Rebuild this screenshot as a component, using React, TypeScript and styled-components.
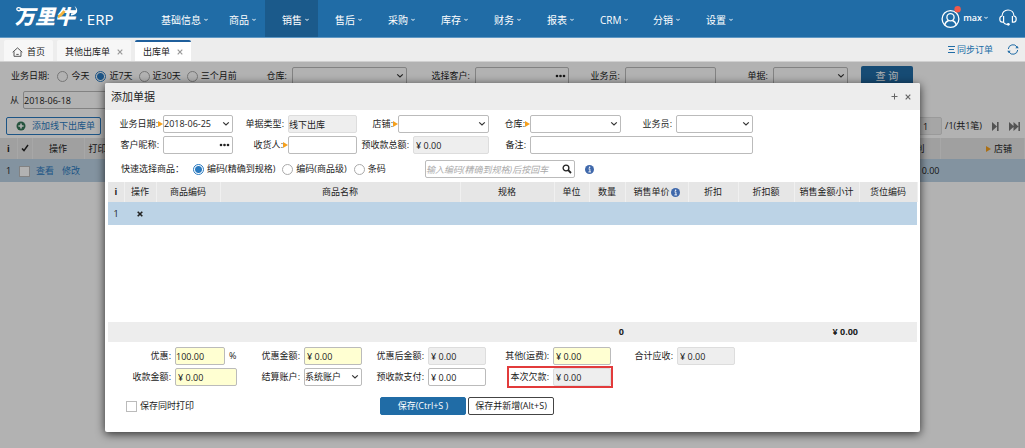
import React from 'react';
import styled, { createGlobalStyle, css } from 'styled-components';

const blue = '#206ca6';
const link = '#2a7ac0';

const GlobalStyle = createGlobalStyle`
  * { box-sizing: border-box; }
  body {
    margin: 0;
    background: #fff;
    color: #222;
    font: 9px/12px 'Open Sans', 'Noto Sans CJK SC', sans-serif;
  }
  button, input, select { font: inherit; color: inherit; }
`;

/* ---------- top bar ---------- */
const TopBar = styled.header`
  display: flex;
  height: 38px;
  background: ${blue};
  border-bottom: 1px solid #5f98c4;
  color: #fff;
`;
const Brand = styled.a`
  position: relative;
  display: flex;
  align-items: center;
  width: 144px;
  padding-left: 15px;
  color: #fff;
  text-decoration: none;
`;
const BrandName = styled.span`
  width: 64px;
  font-size: 20px;
  line-height: 34px;
  padding-bottom: 3px;
  font-weight: 900;
  font-style: italic;
`;
const BrandSwoosh = styled.svg`
  position: absolute;
  left: 14px;
  top: 4px;
`;
const BrandSuffix = styled.span`
  font-size: 15px;
  line-height: 38px;
  padding-top: 1px;
`;
const Nav = styled.nav`
  display: flex;
  flex: 1;
`;
const NavItem = styled.a<{ $active?: boolean }>`
  display: flex;
  align-items: center;
  gap: 3px;
  min-width: 53px;
  padding: 3px 4px 0 17px;
  font-size: 10px;
  color: #fff;
  text-decoration: none;
  white-space: nowrap;
  background: ${(p) => (p.$active ? '#1b5a8b' : 'transparent')};
`;
const Account = styled.div`
  display: flex;
  align-items: center;
  gap: 11px;
  padding: 0 8px 2px 0;
`;
const UserButton = styled.button`
  display: flex;
  align-items: center;
  gap: 2px;
  border: 0;
  padding: 0;
  background: none;
  font-weight: 600;
  color: #fff;
`;
const IconButton = styled.button`
  display: inline-flex;
  padding: 0;
  border: 0;
  background: none;
  color: inherit;
`;

/* ---------- tabs ---------- */
const TabBar = styled.div`
  display: flex;
  align-items: flex-end;
  gap: 4px;
  height: 24px;
  padding: 0 6px 0 4px;
  background: #ededed;
  border-bottom: 1px solid #d0d0d0;
`;
const Tab = styled.div<{ $active?: boolean; $home?: boolean }>`
  display: flex;
  align-items: center;
  gap: ${(p) => (p.$home ? 4 : 7)}px;
  height: 21px;
  padding: 0 8px;
  border-top: 2px solid ${(p) => (p.$active ? '#1f5f9c' : '#f7f7f7')};
  border-radius: 2px 2px 0 0;
  background: ${(p) => (p.$active ? '#fff' : '#f7f7f7')};
  svg { color: #999; }
`;
const TabTools = styled.div`
  display: flex;
  align-items: center;
  align-self: center;
  gap: 14px;
  margin-left: auto;
  color: ${blue};
`;
const SyncLink = styled.a`
  display: flex;
  align-items: center;
  gap: 2px;
  color: ${blue};
  text-decoration: none;
`;

/* ---------- shared controls ---------- */
type Tone = 'plain' | 'muted' | 'edit';
const control = css<{ $tone?: Tone }>`
  width: 100%;
  height: 18px;
  padding: 0;
  border: 1px solid ${(p) => (p.$tone === 'muted' ? '#ddd' : '#bbb')};
  border-radius: 2px;
  outline: 0;
  background: ${(p) => (p.$tone === 'muted' ? '#eee' : p.$tone === 'edit' ? '#ffffd2' : '#fff')};
`;
const TextInput = styled.input<{ $tone?: Tone; $money?: boolean }>`
  ${control}
  padding-left: ${(p) => (p.$money ? 2 : 0)}px;
  &::placeholder { color: #aaa; font-style: italic; }
`;
const SelectInput = styled.select<{ $tone?: Tone }>`
  ${control}
  appearance: none;
`;
const ControlBox = styled.span`
  position: relative;
  display: block;
  flex: 1;
  min-width: 0;
`;
const Adornment = styled.span`
  position: absolute;
  right: 3px;
  top: 0;
  display: flex;
  align-items: center;
  height: 18px;
  pointer-events: none;
`;
const Field = styled.div<{ $label: number; $wide?: boolean; $marked?: boolean }>`
  position: relative;
  display: grid;
  grid-template-columns: ${(p) => p.$label}px 1fr;
  align-items: center;
  ${(p) => p.$wide && 'grid-column: span 2;'}
  ${(p) => p.$marked && css`
    &::after {
      content: '';
      position: absolute;
      inset: -2px -2px -2px 21px;
      border: 2px solid #e23b3b;
      pointer-events: none;
    }
  `}
`;
const FieldLabel = styled.label<{ $required?: boolean }>`
  display: flex;
  align-items: center;
  justify-content: flex-end;
  padding-right: ${(p) => (p.$required ? 0 : 4)}px;
  white-space: nowrap;
`;
const Radio = styled.input`
  appearance: none;
  width: 11px;
  height: 11px;
  margin: 0;
  border: 1px solid #aaa;
  border-radius: 50%;
  background: #fff;
  &:checked {
    border-color: ${link};
    background: radial-gradient(circle, ${link} 3px, #fff 4px);
  }
`;
const Check = styled.input`
  appearance: none;
  display: inline-block;
  width: 11px;
  height: 11px;
  margin: 0;
  border: 1px solid #bbb;
  background: #fff;
  vertical-align: middle;
`;
const Choice = styled.label`
  display: flex;
  align-items: center;
  gap: 3px;
  white-space: nowrap;
`;

/* ---------- list page ---------- */
const Workspace = styled.main`
  position: relative;
  min-height: calc(100vh - 62px);
  padding-top: 4px;
`;
const FilterRow = styled.div`
  display: flex;
  align-items: center;
  height: 20px;
  padding-left: 11px;
`;
const Choices = styled.div`
  display: flex;
  gap: 6px;
  padding-left: 8px;
`;
const Filter = styled.label<{ $label: number; $input: number }>`
  display: grid;
  grid-template-columns: ${(p) => p.$label}px ${(p) => p.$input}px;
  align-items: center;
  white-space: nowrap;
  > span:first-child { padding-right: 5px; text-align: right; }
`;
const QueryButton = styled.button`
  width: 52px;
  height: 20px;
  margin-left: 13px;
  border: 0;
  border-radius: 2px;
  background: ${blue};
  color: #fff;
  font-size: 10px;
`;
const DateRow = styled.div`
  display: flex;
  align-items: center;
  height: 28px;
  padding-left: 10px;
`;
const ListTools = styled.div`
  display: flex;
  align-items: center;
  height: 24px;
  padding: 0 5px 0 6px;
`;
const AddButton = styled.button`
  display: flex;
  align-items: center;
  gap: 6px;
  height: 18px;
  padding: 0 5px 0 9px;
  border: 1px solid ${link};
  border-radius: 2px;
  background: #fff;
  color: ${link};
  white-space: nowrap;
`;
const Pager = styled.div`
  display: flex;
  align-items: center;
  gap: 10px;
  margin-left: auto;
  color: #777;
`;
const PageLabel = styled.label`
  display: grid;
  grid-template-columns: 24px auto;
  align-items: center;
  gap: 3px;
  color: #222;
  input { padding-left: 4px; }
`;
const DataTable = styled.table`
  width: 100%;
  table-layout: fixed;
  border-collapse: collapse;
  th {
    height: 21px;
    padding: 0;
    background: #e6e6e6;
    border-right: 1px solid #f0f0f0;
    font-weight: 400;
    white-space: nowrap;
    text-align: center;
  }
  td { padding: 0; text-align: center; white-space: nowrap; }
`;
const ActiveRow = styled.tr`
  height: 23px;
  background: #bcd3e6;
`;
const LeftTh = styled.th`
  && { text-align: left; padding-left: 4px; }
`;
const RightTh = styled.th`
  && { text-align: right; padding-right: 12px; }
`;
const RightTd = styled.td`
  && { text-align: right; padding-right: 1px; }
`;
const RowLink = styled.a`
  margin: 0 4px;
  color: ${link};
  text-decoration: none;
`;

/* ---------- dialog ---------- */
const Overlay = styled.div`
  position: absolute;
  inset: 0;
  padding: 21px 105px 0;
  background: rgba(0, 0, 0, 0.3);
`;
const Dialog = styled.section`
  background: #fff;
  border-radius: 2px;
  box-shadow: 0 2px 10px rgba(0, 0, 0, 0.75);
`;
const DialogHead = styled.div`
  display: flex;
  align-items: center;
  gap: 7px;
  height: 27px;
  padding: 0 9px 0 6px;
  border-radius: 2px 2px 0 0;
  background: #ededed;
  color: #666;
`;
const DialogTitle = styled.h2`
  flex: 1;
  margin: 0;
  font-size: 11px;
  line-height: 16px;
  font-weight: 400;
  color: #222;
`;
const HeadForm = styled.div`
  display: grid;
  grid-template-columns: 128fr 124fr 132fr 132fr 132fr 167fr;
  row-gap: 3px;
  padding-top: 5px;
`;
const RowStart = styled.div`
  grid-column: 1;
  display: grid;
`;
const QuickRow = styled.div`
  display: flex;
  align-items: center;
  height: 28px;
  padding: 2px 0 0 16px;
`;
const QuickChoices = styled.div`
  display: flex;
  gap: 7px;
  width: 241px;
  padding-left: 9px;
`;
const SearchBox = styled.div`
  position: relative;
  width: 150px;
  margin-right: 10px;
`;
const TableArea = styled.div`
  padding: 0 3px;
  th { height: 20px; }
`;
const HeadIcon = styled.span`
  display: inline-flex;
  align-items: center;
  gap: 1px;
`;
const EmptyRow = styled.tr`
  height: 97px;
`;
const TotalRow = styled.tr`
  height: 20px;
  background: #ededed;
  font-weight: 700;
`;
const TotalCell = styled.td`
  && { text-align: right; padding-right: 1px; }
`;
const PayForm = styled.div`
  display: grid;
  grid-template-columns: 132fr 125fr 124fr 125fr 124fr 185fr;
  row-gap: 3px;
  padding-top: 5px;
`;
const Percent = styled.div`
  display: grid;
  grid-template-columns: 1fr 8px;
  align-items: center;
  column-gap: 4px;
`;
const Actions = styled.div`
  display: flex;
  align-items: center;
  padding: 11px 0 17px 21px;
`;
const PrintChoice = styled(Choice)`
  width: 254px;
`;
const ActionButton = styled.button<{ $primary?: boolean }>`
  width: 86px;
  height: 18px;
  margin-right: 2px;
  padding: 0;
  border: 1px solid ${(p) => (p.$primary ? blue : '#444')};
  border-radius: 2px;
  background: ${(p) => (p.$primary ? blue : '#fff')};
  color: ${(p) => (p.$primary ? '#fff' : '#222')};
  white-space: nowrap;
`;

/* ---------- icons ---------- */
const Caret = () => (
  <svg width="4" height="4" viewBox="0 0 4 4" fill="none" stroke="currentColor"><path d="M.3 .8 2 2.5 3.7 .8" /></svg>
);
const Chevron = () => (
  <svg width="8" height="6" viewBox="0 0 8 6" fill="none" stroke="#333" strokeWidth="1.2"><path d="M1.2 1.4 4 4 6.8 1.4" /></svg>
);
const Dots = () => (
  <svg width="11" height="4" viewBox="0 0 11 4" fill="#222"><circle cx="2" cy="2" r="1.3" /><circle cx="5.5" cy="2" r="1.3" /><circle cx="9" cy="2" r="1.3" /></svg>
);
const Cross = ({ size = 6, weight = 1.2 }: { size?: number; weight?: number }) => (
  <svg width={size} height={size} viewBox="0 0 6 6" fill="none" stroke="currentColor" strokeWidth={weight}><path d="M.7 .7 5.3 5.3M5.3 .7.7 5.3" /></svg>
);
const Plus = () => (
  <svg width="7" height="7" viewBox="0 0 7 7" fill="none" stroke="currentColor"><path d="M3.5 .5v6M.5 3.5h6" /></svg>
);
const Required = () => (
  <svg width="5" height="6" viewBox="0 0 5 6" fill="#f5a01d"><path d="M0 0 5 3 0 6z" /></svg>
);
const Info = () => (
  <svg width="9" height="9" viewBox="0 0 9 9"><circle cx="4.5" cy="4.5" r="4.5" fill="#3f68ab" /><path d="M3.5 3.9h1.4v2.9M3.4 6.9h2.6" stroke="#fff" strokeWidth=".9" fill="none" /><circle cx="4.6" cy="2.2" r=".8" fill="#fff" /></svg>
);
const SearchIcon = () => (
  <svg width="10" height="10" viewBox="0 0 10 10" fill="none" stroke="#222"><circle cx="4" cy="4" r="2.9" strokeWidth="1.3" /><path d="M6.2 6.2 9 9" strokeWidth="1.8" /></svg>
);
const HomeIcon = () => (
  <svg width="11" height="10" viewBox="0 0 11 10" fill="none" stroke="#555"><path d="M.7 5.2 5.5.9l4.8 4.3M2 4.4v4.9h7V4.4M4.3 7.4h2.4" /></svg>
);
const UserIcon = () => (
  <svg width="20" height="23" viewBox="0 0 20 23" fill="none" stroke="#fff" strokeWidth="1.3">
    <circle cx="9.5" cy="13" r="8.4" /><circle cx="9.5" cy="11.3" r="3.6" />
    <path d="M3.7 19c.6-2.6 2.2-4 4-4.5M15.3 19c-.6-2.6-2.2-4-4-4.5" />
    <circle cx="16.6" cy="3.3" r="3.2" fill="#f0594a" stroke="none" />
  </svg>
);
const HeadsetIcon = () => (
  <svg width="18" height="17" viewBox="0 0 18 17" fill="none" stroke="#fff" strokeWidth="1.2">
    <path d="M3 7.2C3 3.4 5.6 1 9 1s6 2.4 6 6.2M4.6 7v6.2H3.2C1.7 13.2.8 12 .8 10.1S1.7 7 3.2 7M13.4 7v6.2h1.4c1.5 0 2.4-1.2 2.4-3.1S16.3 7 14.8 7M4.4 13.3c.8 1.4 2 2 3.7 2.2" />
    <circle cx="9.3" cy="15.3" r="1.4" fill="#fff" stroke="none" />
  </svg>
);
const ListIcon = () => (
  <svg width="7" height="7" viewBox="0 0 7 7" stroke="currentColor"><path d="M0 .5h7M1 3.5h5M0 6.5h7" /></svg>
);
const RefreshIcon = () => (
  <svg width="12" height="11" viewBox="0 0 12 11" fill="none" stroke="currentColor">
    <path d="M1.3 5A4.7 4.7 0 0 1 10 3M10.7 6A4.7 4.7 0 0 1 2 8" /><path d="M8.3 4.2h3.4L10.4 2zM.3 6.8h3.4L1.6 9z" fill="currentColor" stroke="none" />
  </svg>
);
const AddIcon = () => (
  <svg width="10" height="10" viewBox="0 0 10 10"><circle cx="5" cy="5" r="4.5" fill="#36785a" /><path d="M5 2.4v5.2M2.4 5h5.2" stroke="#fff" strokeWidth="1.6" /></svg>
);
const TickIcon = () => (
  <svg width="8" height="8" viewBox="0 0 8 8" fill="none" stroke="#222" strokeWidth="1.5"><path d="M1 4.4 3 6.6 7 1" /></svg>
);
const NextIcon = () => (
  <svg width="7" height="9" viewBox="0 0 7 9" fill="currentColor"><path d="M0 0 5 4.5 0 9zM5 0h1.6v9H5z" /></svg>
);
const LastIcon = () => (
  <svg width="11" height="9" viewBox="0 0 11 9" fill="currentColor"><path d="M0 0 5 4.5 0 9zM4.5 0l5 4.5-5 4.5zM9.4 0H11v9H9.4z" /></svg>
);

/* ---------- field helper ---------- */
interface FormFieldProps {
  id: string;
  label: string;
  labelWidth: number;
  kind?: 'text' | 'select' | 'lookup';
  value?: string;
  tone?: Tone;
  required?: boolean;
  wide?: boolean;
  marked?: boolean;
}
const FormField = ({ id, label, labelWidth, kind = 'text', value = '', tone = 'plain', required, wide, marked }: FormFieldProps) => (
  <Field $label={labelWidth} $wide={wide} $marked={marked}>
    <FieldLabel htmlFor={id} $required={required}>{label}:{required && <Required />}</FieldLabel>
    <ControlBox>
      {kind === 'select'
        ? <SelectInput id={id} defaultValue={value}><option>{value}</option></SelectInput>
        : <TextInput id={id} defaultValue={value} $tone={tone} $money={value.startsWith('¥')} readOnly={tone === 'muted'} />}
      {kind === 'select' && <Adornment><Chevron /></Adornment>}
      {kind === 'lookup' && <Adornment><Dots /></Adornment>}
    </ControlBox>
  </Field>
);

const navItems = ['基础信息', '商品', '销售', '售后', '采购', '库存', '财务', '报表', 'CRM', '分销', '设置'];
const itemColumns: [string, number][] = [
  ['i', 16], ['操作', 32], ['商品编码', 64], ['商品名称', 240], ['规格', 94], ['单位', 35],
  ['数量', 36], ['销售单价', 63], ['折扣', 50], ['折扣额', 56], ['销售金额小计', 65], ['货位编码', 58],
];
const money = '¥ 0.00';

export default function App() {
  return (
    <>
      <GlobalStyle />
      <TopBar>
        <Brand href="#">
          <BrandName>万里牛</BrandName>
          <BrandSwoosh width="66" height="26" viewBox="0 0 66 26" fill="none">
            <path d="M8 6C5 7.500 2.500 6.500 2.800 4.800S6 3.500 8 5.200" stroke="#fff" strokeWidth="1.3" />
            <path d="M44 13c3-1 4.500-3.500 6.500-6" stroke="#f3b33d" strokeWidth="2.800" />
            <path d="M57 9.500c4.500 0 6.500-3.500 3.500-7.500 4.500 3 3.500 9-3.500 9.500z" fill="#fff" />
          </BrandSwoosh>
          <BrandSuffix>· ERP</BrandSuffix>
        </Brand>
        <Nav>
          {navItems.map((n) => (
            <NavItem key={n} href="#" $active={n === '销售'}>{n}<Caret /></NavItem>
          ))}
        </Nav>
        <Account>
          <UserButton><UserIcon />max<Caret /></UserButton>
          <IconButton aria-label="客服"><HeadsetIcon /></IconButton>
        </Account>
      </TopBar>
      <TabBar>
        <Tab $home><HomeIcon />首页</Tab>
        <Tab>其他出库单<Cross /></Tab>
        <Tab $active>出库单<Cross /></Tab>
        <TabTools>
          <SyncLink href="#"><ListIcon />同步订单</SyncLink>
          <IconButton aria-label="刷新"><RefreshIcon /></IconButton>
        </TabTools>
      </TabBar>

      <Workspace>
        <FilterRow>
          业务日期:
          <Choices>
            {['今天', '近7天', '近30天', '三个月前'].map((t) => (
              <Choice key={t}><Radio type="radio" name="range" defaultChecked={t === '近7天'} />{t}</Choice>
            ))}
          </Choices>
          <Filter $label={55} $input={115}>
            <span>仓库:</span>
            <ControlBox><SelectInput /><Adornment><Chevron /></Adornment></ControlBox>
          </Filter>
          <Filter $label={68} $input={94}>
            <span>选择客户:</span>
            <ControlBox><TextInput /><Adornment><Dots /></Adornment></ControlBox>
          </Filter>
          <Filter $label={56} $input={91}>
            <span>业务员:</span>
            <ControlBox><TextInput /></ControlBox>
          </Filter>
          <Filter $label={57} $input={75}>
            <span>单据:</span>
            <ControlBox><SelectInput /><Adornment><Chevron /></Adornment></ControlBox>
          </Filter>
          <QueryButton>查 询</QueryButton>
        </FilterRow>
        <DateRow>
          <Filter $label={13} $input={91}>
            <span>从</span>
            <ControlBox><TextInput defaultValue="2018-06-18" /></ControlBox>
          </Filter>
        </DateRow>
        <ListTools>
          <AddButton><AddIcon />添加线下出库单</AddButton>
          <Pager>
            <PageLabel><TextInput defaultValue="1" $tone="muted" />/1(共1笔)</PageLabel>
            <IconButton aria-label="下一页"><NextIcon /></IconButton>
            <IconButton aria-label="末页"><LastIcon /></IconButton>
          </Pager>
        </ListTools>
        <DataTable>
          <colgroup>
            <col style={{ width: 17 }} /><col style={{ width: 15 }} /><col style={{ width: 52 }} />
            <col style={{ width: 40 }} /><col /><col style={{ width: 50 }} /><col style={{ width: 84 }} />
          </colgroup>
          <thead>
            <tr>
              <th><b>i</b></th><th><TickIcon /></th><th>操作</th><LeftTh>打印</LeftTh><th /><th>毛利</th>
              <RightTh><HeadIcon><Required />&nbsp;店铺</HeadIcon></RightTh>
            </tr>
          </thead>
          <tbody>
            <ActiveRow>
              <td>1</td><td><Check type="checkbox" aria-label="选择" /></td>
              <td><RowLink href="#">查看</RowLink><RowLink href="#">修改</RowLink></td>
              <td /><td /><RightTd>0.00</RightTd><td />
            </ActiveRow>
          </tbody>
        </DataTable>

        <Overlay>
          <Dialog role="dialog" aria-labelledby="dialog-title">
            <DialogHead>
              <DialogTitle id="dialog-title">添加单据</DialogTitle>
              <IconButton aria-label="最大化"><Plus /></IconButton>
              <IconButton aria-label="关闭"><Cross /></IconButton>
            </DialogHead>
            <HeadForm>
              <FormField id="date" label="业务日期" labelWidth={58} kind="select" value="2018-06-25" required />
              <FormField id="type" label="单据类型" labelWidth={55} value="线下出库" tone="muted" />
              <FormField id="shop" label="店铺" labelWidth={41} kind="select" required />
              <FormField id="store" label="仓库" labelWidth={41} kind="select" required />
              <FormField id="clerk" label="业务员" labelWidth={55} kind="select" />
              <RowStart>
                <FormField id="nick" label="客户昵称" labelWidth={58} kind="lookup" />
              </RowStart>
              <FormField id="receiver" label="收货人" labelWidth={55} required />
              <FormField id="prepaid" label="预收款总额" labelWidth={56} value={money} tone="muted" />
              <FormField id="note" label="备注" labelWidth={41} wide />
            </HeadForm>
            <QuickRow>
              快速选择商品：
              <QuickChoices>
                {['编码(精确到规格)', '编码(商品级)', '条码'].map((t, i) => (
                  <Choice key={t}><Radio type="radio" name="quick" defaultChecked={i === 0} />{t}</Choice>
                ))}
              </QuickChoices>
              <SearchBox>
                <TextInput aria-label="商品编码" placeholder="输入编码(精确到规格)后按回车" />
                <Adornment><SearchIcon /></Adornment>
              </SearchBox>
              <Info />
            </QuickRow>
            <TableArea>
              <DataTable>
                <colgroup>{itemColumns.map(([n, w]) => <col key={n} style={{ width: w }} />)}</colgroup>
                <thead>
                  <tr>
                    {itemColumns.map(([n]) => (
                      <th key={n}>{n === 'i' ? <b>i</b> : n === '销售单价' ? <HeadIcon>{n}<Info /></HeadIcon> : n}</th>
                    ))}
                  </tr>
                </thead>
                <tbody>
                  <ActiveRow>
                    <td>1</td>
                    <td><IconButton aria-label="删除"><Cross weight={1.6} /></IconButton></td>
                    <td colSpan={10} />
                  </ActiveRow>
                  <EmptyRow><td colSpan={12} /></EmptyRow>
                </tbody>
                <tfoot>
                  <TotalRow>
                    <td colSpan={6} /><TotalCell>0</TotalCell><td colSpan={3} /><TotalCell>{money}</TotalCell><td />
                  </TotalRow>
                </tfoot>
              </DataTable>
            </TableArea>
            <PayForm>
              <Percent>
                <FormField id="rate" label="优惠" labelWidth={70} value="100.00" tone="edit" />%
              </Percent>
              <FormField id="off" label="优惠金额" labelWidth={67} value={money} tone="edit" />
              <FormField id="after" label="优惠后金额" labelWidth={66} value={money} tone="muted" />
              <FormField id="other" label="其他(运费)" labelWidth={67} value={money} tone="edit" />
              <FormField id="total" label="合计应收" labelWidth={66} value={money} tone="muted" />
              <RowStart>
                <FormField id="paid" label="收款金额" labelWidth={70} value={money} tone="edit" />
              </RowStart>
              <FormField id="account" label="结算账户" labelWidth={67} kind="select" value="系统账户" />
              <FormField id="prepay" label="预收款支付" labelWidth={66} value={money} />
              <FormField id="owed" label="本次欠款" labelWidth={67} value={money} tone="muted" marked />
            </PayForm>
            <Actions>
              <PrintChoice><Check type="checkbox" />保存同时打印</PrintChoice>
              <ActionButton $primary>保存(Ctrl+S )</ActionButton>
              <ActionButton>保存并新增(Alt+S)</ActionButton>
            </Actions>
          </Dialog>
        </Overlay>
      </Workspace>
    </>
  );
}
